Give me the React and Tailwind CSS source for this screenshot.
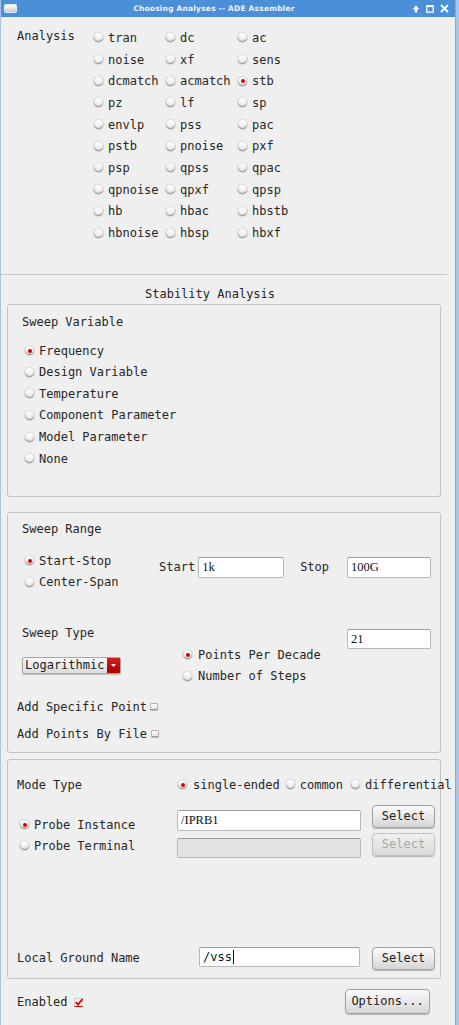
import React from "react";

const MONO = "font-['DejaVu_Sans_Mono',monospace]";

function Radio({ on }) {
  return (
    <span className="flex h-[9px] w-[9px] shrink-0 items-center justify-center rounded-full bg-gradient-to-b from-[#ffffff] to-[#e6e6e6] shadow-[inset_0_-1px_1px_#8a8a8a,0_0_0_1px_#dadada]">
      {on && <span className="h-[4px] w-[4px] rounded-full bg-[#d40000]" />}
    </span>
  );
}

function RadioItem({ on, label, gap = "gap-[5px]", h = "h-[21.7px]" }) {
  return (
    <div className={`flex items-center ${gap} ${h}`}>
      <Radio on={on} />
      <span className="whitespace-nowrap">{label}</span>
    </div>
  );
}

function Check() {
  return <span className="h-[8px] w-[8px] shrink-0 rounded-[1px] border border-[#b4b4b4] bg-gradient-to-b from-[#ffffff] to-[#e2e2e2] shadow-[inset_0_-1px_0_#9a9a9a]" />;
}

function Field({ value, w, h = "h-[21px]", serif = true, disabled = false, caret = false }) {
  return (
    <div
      className={`${w} ${h} flex shrink-0 items-center rounded-[2px] border border-[#b8b8b8] border-t-[#9c9c9c] pl-[3px] ${
        disabled ? "bg-[#e3e3e3]" : "bg-white"
      } ${serif ? "font-['Liberation_Serif',serif] text-[12.5px]" : "text-[12px]"} text-[#111]`}
    >
      {value}
      {caret && <span className="ml-[1px] h-[14px] w-px bg-[#111]" />}
    </div>
  );
}

function Button({ children, w = "w-[63px]", h = "h-[23px]", disabled = false }) {
  return (
    <div
      className={`${w} ${h} flex shrink-0 items-center justify-center rounded-[4px] border bg-gradient-to-b shadow-[0_1px_1px_rgba(0,0,0,0.25)] ${
        disabled
          ? "border-[#c2c2c2] from-[#f0f0f0] to-[#dadada] text-[#a9a9a9]"
          : "border-[#a2a2a2] from-[#fbfbfb] to-[#d6d6d6] text-[#222]"
      }`}
    >
      {children}
    </div>
  );
}

const ANALYSES = [
  "tran", "dc", "ac",
  "noise", "xf", "sens",
  "dcmatch", "acmatch", "stb",
  "pz", "lf", "sp",
  "envlp", "pss", "pac",
  "pstb", "pnoise", "pxf",
  "psp", "qpss", "qpac",
  "qpnoise", "qpxf", "qpsp",
  "hb", "hbac", "hbstb",
  "hbnoise", "hbsp", "hbxf",
];

const SWEEP_VARS = ["Frequency", "Design Variable", "Temperature", "Component Parameter", "Model Parameter", "None"];

export default function App() {
  return (
    <div className={`flex h-[1025px] w-[459px] overflow-hidden bg-[#a9c6e8] ${MONO} text-[12px] leading-[16px] text-[#262626]`}>
      <div className="ml-[1px] h-full w-[455px] shrink-0 border-r border-[#a5a5a5] bg-[#efefef]">
        {/* Title bar */}
        <div className="flex h-[17px] items-center bg-[#4b8fd8] pl-[4px] pr-[6px]">
          <div className="h-[7px] w-[11px] rounded-[1px] bg-gradient-to-b from-[#ffffff] to-[#c9c9c9] shadow-[0_0_0_1px_#e8eef6]" />
          <div className="flex-1 text-center font-['DejaVu_Sans',sans-serif] text-[7.5px] font-bold tracking-[0.2px] text-[#eef4fb]">
            Choosing Analyses -- ADE Assembler
          </div>
          <div className="flex items-center gap-[6px]">
            <svg width="8" height="8" viewBox="0 0 8 8">
              <path d="M4 0.5 L7.5 4.2 H5.2 V7.5 H2.8 V4.2 H0.5 Z" fill="white" />
            </svg>
            <svg width="8" height="8" viewBox="0 0 8 8">
              <rect x="0.8" y="0.8" width="6.4" height="6.4" fill="none" stroke="white" strokeWidth="1.3" />
              <rect x="0.5" y="0.5" width="7" height="1.6" fill="white" />
            </svg>
            <svg width="9" height="9" viewBox="0 0 9 9">
              <path d="M1 1 L8 8 M8 1 L1 8" stroke="white" strokeWidth="1.8" />
            </svg>
          </div>
        </div>

        {/* Analysis */}
        <div className="flex pt-[10px]">
          <div className="h-[18px] w-[93px] pl-[16px] leading-[18px]">Analysis</div>
          <div className="grid grid-cols-[72px_72px_72px]">
            {ANALYSES.map((a) => (
              <RadioItem key={a} label={a} on={a === "stb"} />
            ))}
          </div>
        </div>

        <div className="mt-[30px] w-[446px] border-t border-[#c6c6c6]" />
        <div className="h-[29px] pl-[144px] pt-[11px]">Stability Analysis</div>

        {/* Sweep Variable */}
        <div className="ml-[6px] h-[193px] w-[434px] rounded-[3px] border border-[#c4c4c4]">
          <div className="pl-[14px] pt-[9px]">Sweep Variable</div>
          <div className="mt-[10px] pl-[17px]">
            {SWEEP_VARS.map((v, i) => (
              <RadioItem key={v} label={v} on={i === 0} h="h-[21.6px]" />
            ))}
          </div>
        </div>

        {/* Sweep Range */}
        <div className="ml-[6px] mt-[15px] h-[241px] w-[434px] rounded-[3px] border border-[#c4c4c4]">
          <div className="pl-[14px] pt-[8px]">Sweep Range</div>
          <div className="mt-[13px] flex items-start">
            <div className="w-[151px] shrink-0 pl-[17px]">
              <RadioItem label="Start-Stop" on h="h-[21.5px]" />
              <RadioItem label="Center-Span" h="h-[21.5px]" />
            </div>
            <div className="mt-[7px] flex items-center">
              <span>Start</span>
              <div className="ml-[3px]">
                <Field value="1k" w="w-[86px]" />
              </div>
              <span className="ml-[16px]">Stop</span>
              <div className="ml-[18px]">
                <Field value="100G" w="w-[84px]" />
              </div>
            </div>
          </div>

          <div className="mt-[32px] flex items-start">
            <div className="w-[175px] shrink-0 pl-[14px]">
              <div>Sweep Type</div>
              <div className="mt-[16px] flex h-[17px] w-[99px] items-center overflow-hidden rounded-[2px] border border-[#a6a6a6] bg-gradient-to-b from-[#fafafa] to-[#dcdcdc] shadow-[0_1px_1px_rgba(0,0,0,0.2)]">
                <span className="flex-1 pl-[2px] text-[#222]">Logarithmic</span>
                <span className="flex h-full w-[13px] items-center justify-center bg-gradient-to-b from-[#d81a1a] to-[#a80000]">
                  <svg width="5" height="3" viewBox="0 0 5 3">
                    <path d="M0 0 H5 L2.5 3 Z" fill="white" />
                  </svg>
                </span>
              </div>
            </div>
            <div className="mt-[19px] w-[164px] shrink-0">
              <RadioItem label="Points Per Decade" on gap="gap-[6px]" h="h-[21.5px]" />
              <RadioItem label="Number of Steps" gap="gap-[6px]" h="h-[21.5px]" />
            </div>
            <div className="mt-[4px]">
              <Field value="21" w="w-[84px]" h="h-[20px]" />
            </div>
          </div>

          <div className="mt-[12px] flex h-[16px] items-center gap-[3px] pl-[9px]">
            <span className="whitespace-nowrap">Add Specific Point</span>
            <Check />
          </div>
          <div className="mt-[11px] flex h-[16px] items-center gap-[4px] pl-[9px]">
            <span className="whitespace-nowrap">Add Points By File</span>
            <Check />
          </div>
        </div>

        {/* Mode / Probe */}
        <div className="ml-[6px] mt-[6px] h-[220px] w-[434px] rounded-[3px] border border-[#c4c4c4]">
          <div className="mt-[17px] flex h-[16px] items-center whitespace-nowrap pl-[9px]">
            <span className="w-[161px] shrink-0">Mode Type</span>
            <Radio on />
            <span className="ml-[6px] shrink-0">single-ended</span>
            <span className="ml-[6px] shrink-0"><Radio /></span>
            <span className="ml-[5px] shrink-0">common</span>
            <span className="ml-[8px] shrink-0"><Radio /></span>
            <span className="ml-[5px] shrink-0">differential</span>
          </div>

          <div className="mt-[12px] flex items-start pl-[12px]">
            <div className="mt-[12px] flex h-[16px] w-[157px] shrink-0 items-center gap-[5px]">
              <Radio on />
              <span className="whitespace-nowrap">Probe Instance</span>
            </div>
            <div className="mt-[5px]">
              <Field value="/IPRB1" w="w-[184px]" />
            </div>
            <div className="ml-[11px]">
              <Button>Select</Button>
            </div>
          </div>
          <div className="flex items-start pl-[12px]">
            <div className="mt-[5px] flex h-[16px] w-[157px] shrink-0 items-center gap-[5px]">
              <Radio />
              <span className="whitespace-nowrap">Probe Terminal</span>
            </div>
            <div className="mt-[5px]">
              <Field value="" w="w-[184px]" h="h-[20px]" disabled />
            </div>
            <div className="ml-[11px]">
              <Button disabled>Select</Button>
            </div>
          </div>

          <div className="mt-[89px] flex items-start pl-[9px]">
            <span className="mt-[3px] w-[182px] shrink-0">Local Ground Name</span>
            <Field value="/vss" w="w-[161px]" h="h-[20px]" serif={false} caret />
            <div className="ml-[12px]">
              <Button>Select</Button>
            </div>
          </div>
        </div>

        {/* Footer */}
        <div className="mt-[10px] flex items-start pl-[16px]">
          <div className="mt-[5px] flex w-[328px] shrink-0 items-center gap-[6px]">
            <span>Enabled</span>
            <svg width="10" height="10" viewBox="0 0 10 10">
              <rect x="0.5" y="1.5" width="8" height="8" fill="#f4f4f4" stroke="#d0d0d0" />
              <path d="M1.8 5.2 L4 7.6 L8.6 2" fill="none" stroke="#d40000" strokeWidth="1.8" />
              <path d="M0.5 9.5 H8.5" stroke="#d40000" strokeWidth="1" />
            </svg>
          </div>
          <Button w="w-[85px]" h="h-[25px]">Options...</Button>
        </div>
      </div>
    </div>
  );
}
